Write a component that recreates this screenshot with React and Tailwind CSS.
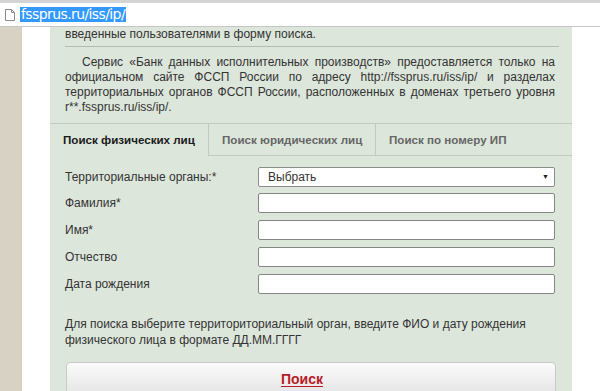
import React from 'react'

const FIELDS = [
  { label: 'Фамилия*' },
  { label: 'Имя*' },
  { label: 'Отчество' },
  { label: 'Дата рождения' },
]

const TABS = [
  { label: 'Поиск физических лиц', w: 'w-[158px]', active: true },
  { label: 'Поиск юридических лиц', w: 'w-[167px]' },
  { label: 'Поиск по номеру ИП', w: 'flex-1' },
]

function DocIcon() {
  return (
    <svg width="10" height="12" viewBox="0 0 10 12" className="shrink-0">
      <path d="M0.5 0.5h6l3 3v8h-9z" fill="#fff" stroke="#8a8a8a" />
      <path d="M6.5 0.5v3h3" fill="none" stroke="#8a8a8a" />
    </svg>
  )
}

export default function App() {
  return (
    <div className="w-[600px] h-[391px] overflow-hidden bg-white font-['Liberation_Sans',Arial,sans-serif] text-[#333]">
      {/* browser address bar */}
      <div className="h-[27px] border-t-[3px] border-t-[#d4d4d4] border-b border-b-[#c6c6c6] flex items-center pl-[5px] gap-[5px]">
        <DocIcon />
        <span className="bg-[#3399ff] text-white text-[14px] leading-[15px] px-[1px] font-['DejaVu_Sans',sans-serif] tracking-[-0.6px]">
          fssprus.ru/iss/ip/
        </span>
      </div>

      <div className="flex h-[364px]">
        <div className="w-[22px] bg-[#d8d2c4]" />
        <div className="w-[28px]" />

        {/* panel */}
        <div className="w-[522px] bg-[#dde6db] text-[12px]">
          <div className="px-[15px]">
            <p className="leading-[15px]">введенные пользователями в форму поиска.</p>
            <div className="mt-[4px] border-t border-[#b3bcb1] mr-[-2px]" />
            <p className="mt-[8px] leading-[15px] text-justify indent-[17px] pr-[2px]">
              Сервис «Банк данных исполнительных производств» предоставляется только на
              официальном сайте ФССП России по адресу http://fssprus.ru/iss/ip/ и разделах
              территориальных органов ФССП России, расположенных в доменах третьего уровня
              r**.fssprus.ru/iss/ip/.
            </p>
          </div>

          {/* tabs */}
          <div className="mt-[8px] flex h-[33px] border-t border-[#c3cbc1]">
            {TABS.map((t, i) => (
              <div
                key={t.label}
                className={`${t.w} flex items-center font-bold text-[11.6px] pl-[13px] ${
                  t.active ? 'text-[#1a1a1a]' : 'text-[#666] border-b border-[#c3cbc1]'
                } ${i > 0 ? 'border-l border-[#c3cbc1]' : ''}`}
              >
                {t.label}
              </div>
            ))}
          </div>

          {/* form */}
          <div className="px-[15px] pt-[11px]">
            <div className="flex items-center h-[20px]">
              <span className="w-[193px]">Территориальные органы:*</span>
              <div className="w-[297px] h-[20px] bg-white border border-[#8c8c8c] rounded-[2px] flex items-center justify-between pl-[9px] pr-[5px]">
                <span>Выбрать</span>
                <span className="text-[7px] text-[#222]">▼</span>
              </div>
            </div>
            <div className="mt-[6px] flex flex-col gap-[7px]">
              {FIELDS.map(f => (
                <div key={f.label} className="flex items-center h-[20px]">
                  <span className="w-[193px]">{f.label}</span>
                  <div className="w-[297px] h-[20px] bg-white border border-[#858585] rounded-[2px]" />
                </div>
              ))}
            </div>

            <p className="mt-[22px] leading-[16px]">
              Для поиска выберите территориториальный орган, введите ФИО и дату рождения
              <br />
              физического лица в формате ДД.ММ.ГГГГ
            </p>

            <div className="mt-[14px] ml-[1px] w-[490px] h-[34px] rounded-[4px] border border-[#c9c9c9] bg-gradient-to-b from-[#fbfbfb] to-[#e4e4e4] flex justify-center pt-[6px] pr-[18px]">
              <span className="text-[14px] font-bold text-[#b81d27] underline underline-offset-[2px]">Поиск</span>
            </div>
          </div>
        </div>
      </div>
    </div>
  )
}
